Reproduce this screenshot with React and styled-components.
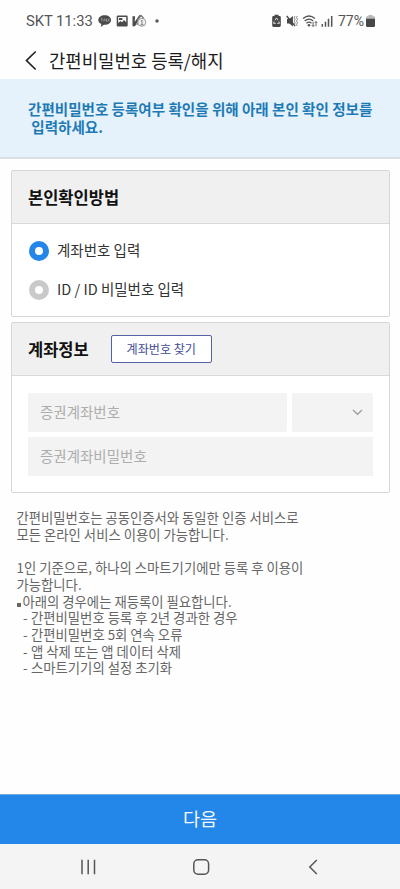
import React from 'react';
import styled, { createGlobalStyle } from 'styled-components';

const GlobalStyle = createGlobalStyle`
  * { box-sizing: border-box; }
  body { margin: 0; background: #fefefe; }
  button { margin: 0; padding: 0; border: 0; background: none; font: inherit; color: inherit; }
`;

const Screen = styled.div`
  width: 400px;
  height: 889px;
  overflow: hidden;
  display: flex;
  flex-direction: column;
  background: #fefefe;
  font-family: 'Noto Sans CJK KR', 'Noto Sans', sans-serif;
`;

const StatusBar = styled.div`
  height: 41px;
  padding: 0 25px 0 26px;
  display: flex;
  align-items: center;
  justify-content: space-between;
  font-family: Roboto, sans-serif;
  font-size: 14.8px;
  line-height: 18px;
  color: #555;
`;

const StatusGroup = styled.div`
  display: flex;
  align-items: center;
`;

const Carrier = styled.span`
  width: 72px;
  white-space: nowrap;
  letter-spacing: -0.05px;
`;

const Percent = styled.span`
  width: 28px;
  font-size: 14px;
  white-space: nowrap;
`;

const TitleBar = styled.header`
  height: 38px;
  padding-left: 25px;
  display: flex;
  align-items: center;
`;

const Title = styled.h1`
  margin: 0 0 0 12px;
  font-size: 17.8px;
  line-height: 24px;
  font-weight: 400;
  color: #1c1c1c;
  white-space: nowrap;
`;

const Banner = styled.div`
  height: 80px;
  padding: 21px 0 0 28px;
  background: #e5f2fc;
  border-bottom: 2px solid #dcdfe2;
  font-size: 14.55px;
  line-height: 18px;
  font-weight: 700;
  color: #1d7ab5;
  white-space: pre;
`;

const Cards = styled.main`
  padding: 11px 10px 0 11px;
  display: flex;
  flex-direction: column;
  gap: 5px;
`;

const Card = styled.section`
  height: ${({ $height }) => $height}px;
  border: 1px solid #d6d6d6;
  border-radius: 2px;
  background: #fff;
`;

const CardHeader = styled.div`
  height: 53px;
  padding-left: 16px;
  display: flex;
  align-items: center;
  border-bottom: 1px solid #d9d9d9;
  background: #f0f0f0;
`;

const CardTitle = styled.h2`
  margin: 0;
  font-size: 16.5px;
  line-height: 24px;
  font-weight: 700;
  color: #111;
  white-space: nowrap;
`;

const FindButton = styled.button`
  width: 101px;
  height: 28px;
  margin-left: 22px;
  border: 1px solid #5660a5;
  border-radius: 2px;
  background: #fff;
  font-size: 12.1px;
  line-height: 24px;
  color: #414b94;
  white-space: nowrap;
`;

const RadioList = styled.div`
  padding: 16px 0 0 17px;
  display: flex;
  flex-direction: column;
  gap: 17px;
`;

const RadioRow = styled.div`
  height: 22px;
  display: flex;
  align-items: center;
  gap: 8px;
  font-size: 14.5px;
  line-height: 22px;
  color: #333;
  white-space: nowrap;
`;

const RadioLabel = styled.span`
  padding-bottom: 2px;
`;

const RadioMark = styled.span`
  width: 20px;
  height: 20px;
  border: 6.5px solid ${({ $checked }) => ($checked ? '#2386e8' : '#c9c9c9')};
  border-radius: 50%;
  background: #fff;
`;

const Fields = styled.div`
  padding: 17px 16px 0;
  display: grid;
  grid-template-columns: 258.5px 80.8px;
  column-gap: 5.7px;
  row-gap: 5px;
`;

const Field = styled.div`
  height: 39px;
  padding: 0 0 2px 12px;
  display: flex;
  align-items: center;
  grid-column: ${({ $wide }) => ($wide ? '1 / -1' : 'auto')};
  border-radius: ${({ $wide }) => ($wide ? 0 : 2)}px;
  background: #f3f3f3;
  font-size: 14.5px;
  line-height: 22px;
  color: #adadad;
`;

const SelectField = styled(Field)`
  justify-content: flex-end;
  padding: 0 10px 0 0;
`;

const Notes = styled.div`
  padding: 17px 0 0 16.5px;
  font-size: 13.35px;
  line-height: 16.7px;
  color: #666;
`;

const NoteLine = styled.p`
  margin: 0;
  min-height: 16.7px;
  padding-left: ${({ $indent = 0 }) => $indent}px;
  white-space: pre;
`;

const Bullet = styled.span`
  display: inline-block;
  width: 4px;
  height: 4px;
  margin-right: 2px;
  background: #666;
`;

const Dash = styled.span`
  display: inline-block;
  width: 8px;
`;

const NextButton = styled.button`
  height: 50px;
  margin-top: auto;
  padding-bottom: 3px;
  border-top: 1px solid #75a9da;
  background: #2386e9;
  font-size: 18.6px;
  font-weight: 400;
  line-height: 46px;
  color: #f4f9ff;
`;

const NavBar = styled.nav`
  height: 45px;
  padding: 0 75px 0 80px;
  display: flex;
  align-items: center;
  justify-content: space-between;
  background: #f4f4f4;
`;

const Icon = styled.svg`
  display: block;
  flex: none;
  overflow: visible;
`;

const NotificationIcons = () => (
  <Icon width="64" height="14" viewBox="0 0 64 14">
    <path d="M6.700 1.200C3 1.200.3 3.300.3 6c0 1.800 1.200 3.300 3 4.100L2.800 13l3-2.200h.9c3.600 0 6.400-2.100 6.400-4.800S10.300 1.200 6.700 1.200Z" fill="#4b4b4b" />
    <path d="M2.800 4.700h2M3.800 4.700v2.600M5.500 7.300l1-2.600 1 2.600M8.500 4.500v2.800h1M10.300 4.500v2.800M11.700 5l-1.200 1 1.200 1.300" fill="none" stroke="#aaa" strokeWidth=".7" />
    <path fillRule="evenodd" d="M20 1.500h8.400q1.300 0 1.300 1.300v8.400q0 1.300-1.300 1.300H20q-1.300 0-1.300-1.300V2.800q0-1.300 1.300-1.300ZM20.200 3v6l2.300-2 1.500 1.300L26 6l2.200 2.300V3Z" fill="#4b4b4b" />
    <path d="M21 4h3.400v2H21Z" fill="#4b4b4b" />
    <path d="M34.500 2.300h2.600l-.4 5.800 4.500-6.800h2l-6.200 10.900h-2.500Z" fill="#4b4b4b" />
    <path d="m39 11 1-6 3-3.500 3 3" fill="none" stroke="#777" strokeWidth="1.200" />
    <circle cx="43.800" cy="8.300" r="4" fill="#f2f2f2" stroke="#999" />
    <path d="m42.800 7.200 1.200-1v4.600M42.500 10.800h3" fill="none" stroke="#777" strokeWidth=".9" />
    <circle cx="59" cy="7" r="1.700" fill="#555" />
  </Icon>
);

const SystemIcons = () => (
  <Icon width="66" height="14" viewBox="0 0 66 14">
    <path d="M2.500.7h4v1.200h1q1.300 0 1.300 1.300v8.400q0 1.300-1.300 1.300h-6Q.2 12.900.2 11.600V3.200q0-1.300 1.300-1.300h1Z" fill="#474747" />
    <path d="m3 6.200 1.500-2.300L6 6.200M6.800 7.500l.7 1.800H5.200M2.200 7.500l-.7 1.800h2.300" fill="none" stroke="#eee" strokeWidth=".9" />
    <path d="M15 5h2.300l3.600-3v10.500l-3.600-3H15Z" fill="#474747" />
    <path d="m14.700 2 8.400 10" stroke="#474747" strokeWidth="1.400" />
    <path d="m23 2-.8 1.700 1 1.700-1 1.700 1 1.700-1 1.700.8 1.500M25.300 2l-.8 1.700 1 1.700-1 1.700 1 1.700-1 1.700.8 1.500" fill="none" stroke="#666" strokeWidth=".8" />
    <path d="M31 4.500q6-5 12 0M32.700 7q4.300-3.600 8.600 0M34.500 9.200q2.500-2 5 0" fill="none" stroke="#555" strokeWidth="1.300" />
    <circle cx="37" cy="11.200" r="1.300" fill="#555" />
    <path d="M41.100 8v4.500m-1.200-1.300 1.200 1.300 1.200-1.300M44 12.300V7.500m-1.200 1.300L44 7.500l1.200 1.300" fill="none" stroke="#555" strokeWidth=".9" />
    <path d="M50.300 10v2.700M53.500 7.700v5M56.500 4.700v8M59.700 2v10.700" stroke="#555" strokeWidth="1.500" />
  </Icon>
);

const BatteryIcon = () => (
  <Icon width="9" height="14" viewBox="0 0 9 14">
    <path d="M2.500 1h4v1.300H8q1 0 1 1V5H0V3.300q0-1 1-1h1.500Z" fill="#b8b8b8" />
    <path d="M0 4.700h9v7q0 1.200-1.200 1.200H1.200Q0 12.900 0 11.700Z" fill="#474747" />
  </Icon>
);

const notes = [
  { text: '간편비밀번호는 공동인증서와 동일한 인증 서비스로' },
  { text: '모든 온라인 서비스 이용이 가능합니다.' },
  { text: '' },
  { text: '1인 기준으로, 하나의 스마트기기에만 등록 후 이용이' },
  { text: '가능합니다.' },
  { text: '아래의 경우에는 재등록이 필요합니다.', bullet: true },
  { text: '간편비밀번호 등록 후 2년 경과한 경우', dash: true },
  { text: '간편비밀번호 5회 연속 오류', dash: true },
  { text: '앱 삭제 또는 앱 데이터 삭제', dash: true },
  { text: '스마트기기의 설정 초기화', dash: true },
];

export default function App() {
  return (
    <Screen>
      <GlobalStyle />
      <StatusBar>
        <StatusGroup>
          <Carrier>SKT 11:33</Carrier>
          <NotificationIcons />
        </StatusGroup>
        <StatusGroup>
          <SystemIcons />
          <Percent>77%</Percent>
          <BatteryIcon />
        </StatusGroup>
      </StatusBar>
      <TitleBar>
        <Icon width="12" height="20" viewBox="0 0 12 20">
          <path d="M10.700 1.500 1.500 10.500l9.200 9" fill="none" stroke="#222" strokeWidth="1.700" />
        </Icon>
        <Title>간편비밀번호 등록/해지</Title>
      </TitleBar>
      <Banner>{'간편비밀번호 등록여부 확인을 위해 아래 본인 확인 정보를\n 입력하세요.'}</Banner>
      <Cards>
        <Card $height={147}>
          <CardHeader>
            <CardTitle>본인확인방법</CardTitle>
          </CardHeader>
          <RadioList>
            <RadioRow>
              <RadioMark $checked />
              <RadioLabel>계좌번호 입력</RadioLabel>
            </RadioRow>
            <RadioRow>
              <RadioMark />
              <RadioLabel>ID / ID 비밀번호 입력</RadioLabel>
            </RadioRow>
          </RadioList>
        </Card>
        <Card $height={171}>
          <CardHeader>
            <CardTitle>계좌정보</CardTitle>
            <FindButton>계좌번호 찾기</FindButton>
          </CardHeader>
          <Fields>
            <Field>증권계좌번호</Field>
            <SelectField>
              <Icon width="11" height="7" viewBox="0 0 11 7">
                <path d="m1 1 4.500 4.300L10 1" fill="none" stroke="#999" strokeWidth="1.200" />
              </Icon>
            </SelectField>
            <Field $wide>증권계좌비밀번호</Field>
          </Fields>
        </Card>
      </Cards>
      <Notes>
        {notes.map(({ text, bullet, dash }, index) => (
          <NoteLine key={index} $indent={dash ? 6.5 : 0}>
            {bullet && <Bullet />}
            {dash && <Dash>-</Dash>}
            {text}
          </NoteLine>
        ))}
      </Notes>
      <NextButton>다음</NextButton>
      <NavBar>
        <Icon width="16" height="16" viewBox="0 0 16 16">
          <path d="M2 .8v14.400M8.200.8v14.400M14.500.8v14.400" stroke="#555" strokeWidth="1.500" />
        </Icon>
        <Icon width="16" height="16" viewBox="0 0 16 16">
          <rect x="-1.200" y=".8" width="14.800" height="14.400" rx="4.200" fill="none" stroke="#555" strokeWidth="1.500" />
        </Icon>
        <Icon width="16" height="16" viewBox="0 0 16 16">
          <path d="M7.800 1 .8 8l7 7" fill="none" stroke="#555" strokeWidth="1.500" />
        </Icon>
      </NavBar>
    </Screen>
  );
}
